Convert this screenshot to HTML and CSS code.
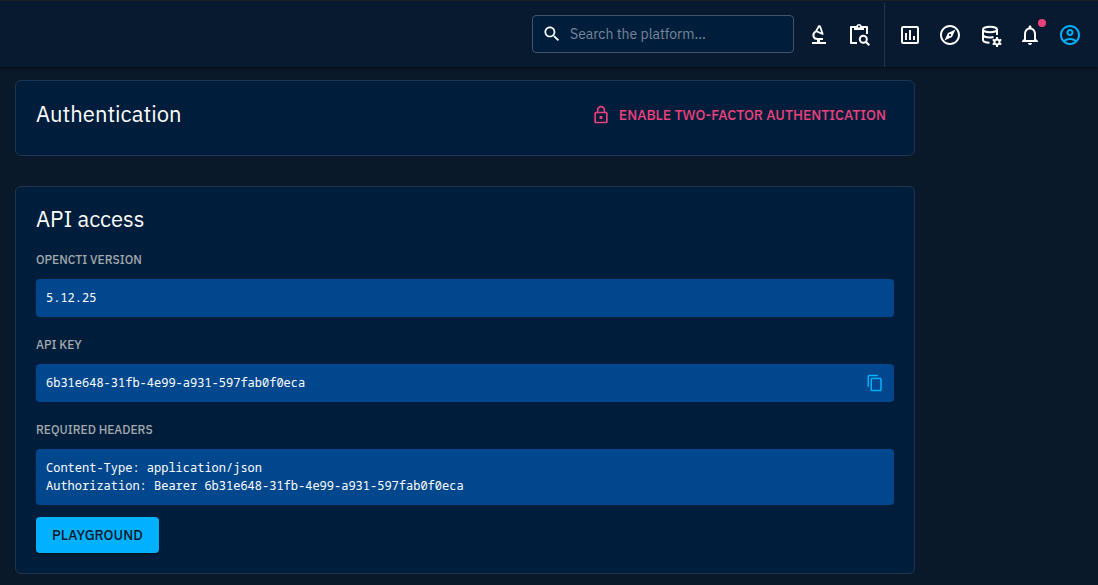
FILE: index.html
```html
<!DOCTYPE html>
<html lang="en">
<head>
<meta charset="utf-8">
<title>Profile</title>
<link rel="stylesheet" href="styles.css">
</head>
<body>
<header class="topbar">
  <label class="search">
    <svg class="search-icon" viewBox="0 0 24 24" aria-hidden="true"><path d="M15.5 14h-.79l-.28-.27C15.41 12.59 16 11.11 16 9.5 16 5.91 13.09 3 9.5 3S3 5.91 3 9.5 5.91 16 9.5 16c1.61 0 3.09-.59 4.23-1.57l.27.28v.79l5 4.99L20.49 19l-4.99-5zm-6 0C7.01 14 5 11.99 5 9.5S7.01 5 9.5 5 14 7.01 14 9.5 11.99 14 9.5 14z"/></svg>
    <input class="search-input" type="text" placeholder="Search the platform..." aria-label="Search the platform">
  </label>
  <div class="tools">
    <button class="icon-button" type="button" aria-label="Advanced search"><svg viewBox="0 0 24 24"><path d="M5 19h5v-2h3v2h6v2H5z"/><path d="M8.500 8.500C5 11 6 16 10.500 16H16" fill="none" stroke="currentColor" stroke-width="2"/><path d="M9 8.200 12 3l1 .3 2.700 7.700z" fill="none" stroke="currentColor" stroke-width="1.800" stroke-linejoin="round"/></svg></button>
    <button class="icon-button" type="button" aria-label="Bulk search"><svg viewBox="0 0 24 24"><path d="M10 20H4V4h16v7" fill="none" stroke="currentColor" stroke-width="2" stroke-linejoin="round"/><path d="M7 3h2.200a3 3 0 0 1 5.600 0H17v4H7z"/><circle cx="16.300" cy="16.300" r="3.500" fill="none" stroke="currentColor" stroke-width="2"/><path d="M18.800 18.800l3.500 3.500" stroke="currentColor" stroke-width="2"/><circle cx="12" cy="3.600" r="1" fill="#071a2f"/></svg></button>
  </div>
  <nav class="tools tools-main" aria-label="Platform">
    <button class="icon-button" type="button" aria-label="Dashboards"><svg viewBox="0 0 24 24"><path d="M9 17H7v-7h2v7zm4 0h-2V7h2v10zm4 0h-2v-4h2v4zm2 2H5V5h14v14zm0-16H5c-1.100 0-2 .9-2 2v14c0 1.100.9 2 2 2h14c1.100 0 2-.9 2-2V5c0-1.100-.9-2-2-2z"/></svg></button>
    <button class="icon-button" type="button" aria-label="Investigations"><svg viewBox="0 0 24 24"><path d="M12 2C6.480 2 2 6.480 2 12s4.480 10 10 10 10-4.480 10-10S17.520 2 12 2zm0 18c-4.410 0-8-3.590-8-8s3.590-8 8-8 8 3.590 8 8-3.590 8-8 8zm-5.500-2.500l7.510-3.490L17.500 6.500 9.990 9.990 6.500 17.500zm5.500-6.600c.61 0 1.100.49 1.100 1.100s-.49 1.100-1.100 1.100-1.100-.49-1.100-1.100.49-1.100 1.100-1.100z"/></svg></button>
    <button class="icon-button" type="button" aria-label="Data management"><svg viewBox="0 0 24 24"><g fill="none" stroke="currentColor" stroke-width="2"><ellipse cx="12" cy="6.500" rx="7" ry="2.700"/><path d="M5 6.500V17c0 1.500 3 2.700 6.500 2.700M5 11.800c0 1.500 3 2.700 7 2.700 1.500 0 2.500-.2 3.500-.5M19 6.500v5.500"/><circle cx="19" cy="19" r="2.600"/><path d="M19 14v2m0 6v2m-4.300-7.500 1.700 1m5.200 3 1.700 1m-8.600 0 1.700-1m5.200-3 1.700-1"/></g></svg></button>
    <button class="icon-button notify" type="button" aria-label="Notifications"><svg viewBox="0 0 24 24"><path d="M12 22c1.100 0 2-.9 2-2h-4c0 1.100.9 2 2 2zm6-6v-5c0-3.070-1.630-5.640-4.500-6.320V4c0-.83-.67-1.500-1.500-1.500s-1.500.67-1.500 1.500v.68C7.640 5.360 6 7.920 6 11v5l-2 2v1h16v-1l-2-2zm-2 1H8v-6c0-2.480 1.510-4.500 4-4.500s4 2.020 4 4.500v6z"/></svg><span class="dot"></span></button>
    <button class="icon-button active" type="button" aria-label="Profile"><svg viewBox="0 0 24 24"><path d="M12 2C6.480 2 2 6.480 2 12s4.480 10 10 10 10-4.480 10-10S17.520 2 12 2zM7.350 18.500C8.660 17.560 10.260 17 12 17s3.340.56 4.650 1.500c-1.310.94-2.910 1.500-4.650 1.500s-3.340-.56-4.650-1.500zm10.790-1.380C16.450 15.800 14.320 15 12 15s-4.450.8-6.140 2.120C4.700 15.730 4 13.950 4 12c0-4.420 3.580-8 8-8s8 3.580 8 8c0 1.950-.7 3.730-1.860 5.120z"/><path d="M12 6c-1.930 0-3.500 1.570-3.500 3.500S10.070 13 12 13s3.500-1.570 3.500-3.500S13.930 6 12 6zm0 5c-.83 0-1.500-.67-1.500-1.500S11.170 8 12 8s1.500.67 1.500 1.500S12.830 11 12 11z"/></svg></button>
  </nav>
</header>
<main class="content">
  <section class="card card-auth">
    <h1 class="title">Authentication</h1>
    <button class="two-factor" type="button"><svg class="lock-icon" viewBox="0 0 24 24" aria-hidden="true"><path d="M12 17a2 2 0 1 1 0-4 2 2 0 0 1 0 4M18 20V10H6V20H18M18 8A2 2 0 0 1 20 10V20A2 2 0 0 1 18 22H6C4.890 22 4 21.100 4 20V10C4 8.890 4.890 8 6 8H7V6A5 5 0 0 1 12 1A5 5 0 0 1 17 6V8H18M12 3A3 3 0 0 0 9 6V8H15V6A3 3 0 0 0 12 3Z"/></svg>Enable two-factor authentication</button>
  </section>
  <section class="card">
    <h1 class="title">API access</h1>
    <h2 class="label">OpenCTI version</h2>
    <pre class="code">5.12.25</pre>
    <h2 class="label">API key</h2>
    <div class="code code-row"><span>6b31e648-31fb-4e99-a931-597fab0f0eca</span><button class="copy" type="button" aria-label="Copy"><svg class="copy-icon" viewBox="0 0 24 24"><path d="M16 1H4c-1.100 0-2 .9-2 2v14h2V3h12V1zm3 4H8c-1.100 0-2 .9-2 2v14c0 1.100.9 2 2 2h11c1.100 0 2-.9 2-2V7c0-1.100-.9-2-2-2zm0 16H8V7h11v14z"/></svg></button></div>
    <h2 class="label">Required headers</h2>
    <pre class="code">Content-Type: application/json
Authorization: Bearer 6b31e648-31fb-4e99-a931-597fab0f0eca</pre>
    <a class="playground" href="#playground">Playground</a>
  </section>
</main>
</body>
</html>
```
FILE: styles.css
```css
* { box-sizing: border-box; }
body {
  margin: 0;
  background: #0a1929;
  color: #fff;
  font-family: "IBM Plex Sans", Roboto, sans-serif;
  font-size: 14px;
}
button { padding: 0; border: 0; background: none; color: inherit; font: inherit; cursor: pointer; }
svg { display: block; overflow: visible; fill: currentColor; }
.topbar {
  display: flex;
  align-items: center;
  justify-content: flex-end;
  gap: 13px;
  height: 67px;
  padding: 2px 16px 0 16px;
  border-top: 1px solid #1c1f22;
  background: #071a2f;
  box-shadow: 0 1px 2px rgba(0, 0, 0, 0.6);
}
.search {
  display: flex;
  align-items: center;
  gap: 8px;
  width: 262px;
  height: 38px;
  margin-bottom: 2px;
  padding: 0 9px;
  border: 1px solid #41546a;
  border-radius: 4px;
  background: #001e3c;
}
.search-icon { flex: none; width: 20px; height: 20px; }
.search-input {
  flex: 1;
  min-width: 0;
  padding: 0;
  border: 0;
  outline: 0;
  background: none;
  color: #fff;
  font: inherit;
}
.search-input::placeholder { color: #76869a; opacity: 1; }
.tools { display: flex; align-items: center; gap: 16px; }
.tools-main { align-self: stretch; padding-left: 13px; border-left: 1px solid #263648; }
.icon-button { position: relative; width: 24px; height: 24px; }
.icon-button.active { color: #00b1ff; }
.dot {
  position: absolute;
  top: -4px;
  right: -4px;
  width: 8px;
  height: 8px;
  border-radius: 50%;
  background: #ec407a;
}
.content {
  display: grid;
  gap: 30px;
  max-width: 930px;
  padding: 13px 15px 11px;
}
.card {
  padding: 19px 20px 20px;
  border: 1px solid #1d3550;
  border-radius: 6px;
  background: #001e3c;
}
.card-auth { display: flex; justify-content: space-between; align-items: flex-start; padding: 20px 28px 26px 20px; }
.title { margin: 0; font-size: 22px; font-weight: 400; line-height: 26px; }
.two-factor {
  display: flex;
  align-items: center;
  gap: 8px;
  color: #ec407a;
  font-weight: 500;
  line-height: 28px;
  text-transform: uppercase;
}
.lock-icon { width: 20px; height: 20px; }
.copy-icon { width: 18px; height: 18px; }
.label {
  margin: 18px 0 9px;
  color: #a3a8ac;
  font-size: 12px;
  font-weight: 500;
  line-height: 20px;
  text-transform: uppercase;
}
.code {
  margin: 0;
  padding: 10px;
  border-radius: 4px;
  background: #01478d;
  font-family: "Noto Sans Mono", "DejaVu Sans Mono", monospace;
  font-size: 12px;
  line-height: 18px;
}
.code-row { display: flex; align-items: center; justify-content: space-between; }
.copy { color: #00b1ff; }
.playground {
  display: inline-block;
  margin-top: 12px;
  padding: 0 16px;
  border-radius: 4px;
  background: #00b1ff;
  box-shadow: 0 2px 3px rgba(0, 0, 0, 0.4);
  color: #07192b;
  font-weight: 500;
  line-height: 36px;
  text-decoration: none;
  text-transform: uppercase;
}
```
